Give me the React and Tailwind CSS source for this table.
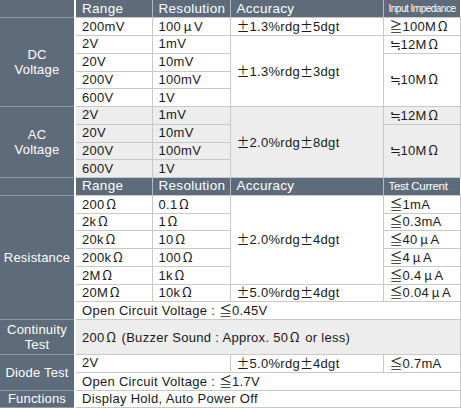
import React from 'react';

// Multimeter spec sheet table

const wide = /^[Ωμ]$/;

const sym = (str) =>
  str.split(/([±≦≧≒μΩ])/).map((part, i) =>
    /^[±≦≧≒μΩ]$/.test(part) ? (
      wide.test(part) ? (
        <span
          key={i}
          className="inline-block w-[13px] text-center font-['Noto_Sans_CJK_JP',sans-serif] leading-[14px] tracking-normal"
        >
          {part}
        </span>
      ) : (
        <span key={i} className="font-['Noto_Sans_CJK_JP',sans-serif] leading-[14px] tracking-normal">
          {part}
        </span>
      )
    ) : (
      part
    )
  );

const Label = ({ children, rows = 1 }) => (
  <td
    rowSpan={rows}
    className="border-b border-r-2 border-b-[#8f99a4] border-r-white bg-[#5e6b7a] p-0 text-center align-middle text-[13px] leading-[15px] tracking-[0.2px] text-white"
  >
    {children}
  </td>
);

const Head = ({ children }) => (
  <td className="border-l border-[#b3bac2] bg-[#5e6b7a] py-0 pl-[6px] text-[13.5px] leading-[14px] tracking-[0.3px] text-white">
    {children}
  </td>
);

const Cell = ({ children, rows = 1, cols = 1 }) => (
  <td
    rowSpan={rows}
    colSpan={cols}
    className="whitespace-nowrap border border-[#c8c8c8] py-0 pl-[6px] align-middle leading-[14px] tracking-[0.3px]"
  >
    {sym(children || '')}
  </td>
);

const rowH = 'h-[17.75px]';

export default function App() {
  return (
    <div className="h-[409px] w-[461px] overflow-hidden bg-white font-['Liberation_Sans',Arial,sans-serif] text-[13px] leading-[14px] text-[#1a1a1a]">
      <table className="w-[460px] table-fixed border-collapse">
        <colgroup>
          <col className="w-[75px]" />
          <col className="w-[77px]" />
          <col className="w-[78px]" />
          <col className="w-[153px]" />
          <col className="w-[77px]" />
        </colgroup>
        <tbody>
          {/* Header */}
          <tr className={rowH}>
            <Label />
            <Head>Range</Head>
            <Head>Resolution</Head>
            <Head>Accuracy</Head>
            <td className="whitespace-nowrap border-l border-[#b3bac2] bg-[#5e6b7a] py-0 pl-[5px] text-[10px] leading-[14px] tracking-[-0.5px] text-white">
              Input Impedance
            </td>
          </tr>

          {/* DC Voltage */}
          <tr className={rowH}>
            <Label rows={5}>
              DC
              <br />
              Voltage
            </Label>
            <Cell>200mV</Cell>
            <Cell>100μV</Cell>
            <Cell>±1.3%rdg±5dgt</Cell>
            <Cell>≧100MΩ</Cell>
          </tr>
          <tr className={rowH}>
            <Cell>2V</Cell>
            <Cell>1mV</Cell>
            <Cell rows={4}>±1.3%rdg±3dgt</Cell>
            <Cell>≒12MΩ</Cell>
          </tr>
          <tr className={rowH}>
            <Cell>20V</Cell>
            <Cell>10mV</Cell>
            <Cell rows={3}>≒10MΩ</Cell>
          </tr>
          <tr className={rowH}>
            <Cell>200V</Cell>
            <Cell>100mV</Cell>
          </tr>
          <tr className={rowH}>
            <Cell>600V</Cell>
            <Cell>1V</Cell>
          </tr>

          {/* AC Voltage */}
          <tr className={rowH + ' bg-[#ededed]'}>
            <Label rows={4}>
              AC
              <br />
              Voltage
            </Label>
            <Cell>2V</Cell>
            <Cell>1mV</Cell>
            <Cell rows={4}>±2.0%rdg±8dgt</Cell>
            <Cell>≒12MΩ</Cell>
          </tr>
          <tr className={rowH + ' bg-[#ededed]'}>
            <Cell>20V</Cell>
            <Cell>10mV</Cell>
            <Cell rows={3}>≒10MΩ</Cell>
          </tr>
          <tr className={rowH + ' bg-[#ededed]'}>
            <Cell>200V</Cell>
            <Cell>100mV</Cell>
          </tr>
          <tr className={rowH + ' bg-[#ededed]'}>
            <Cell>600V</Cell>
            <Cell>1V</Cell>
          </tr>

          {/* Header 2 */}
          <tr className={rowH}>
            <Label />
            <Head>Range</Head>
            <Head>Resolution</Head>
            <Head>Accuracy</Head>
            <td className="whitespace-nowrap border-l border-[#b3bac2] bg-[#5e6b7a] py-0 pl-[5px] text-[11.5px] leading-[14px] tracking-[-0.3px] text-white">
              Test Current
            </td>
          </tr>

          {/* Resistance */}
          <tr className={rowH}>
            <Label rows={7}>Resistance</Label>
            <Cell>200Ω</Cell>
            <Cell>0.1Ω</Cell>
            <Cell rows={5}>±2.0%rdg±4dgt</Cell>
            <Cell>≦1mA</Cell>
          </tr>
          <tr className={rowH}>
            <Cell>2kΩ</Cell>
            <Cell>1Ω</Cell>
            <Cell>≦0.3mA</Cell>
          </tr>
          <tr className={rowH}>
            <Cell>20kΩ</Cell>
            <Cell>10Ω</Cell>
            <Cell>≦40μA</Cell>
          </tr>
          <tr className={rowH}>
            <Cell>200kΩ</Cell>
            <Cell>100Ω</Cell>
            <Cell>≦4μA</Cell>
          </tr>
          <tr className={rowH}>
            <Cell>2MΩ</Cell>
            <Cell>1kΩ</Cell>
            <Cell>≦0.4μA</Cell>
          </tr>
          <tr className={rowH}>
            <Cell>20MΩ</Cell>
            <Cell>10kΩ</Cell>
            <Cell>±5.0%rdg±4dgt</Cell>
            <Cell>≦0.04μA</Cell>
          </tr>
          <tr className={rowH}>
            <Cell cols={4}>Open Circuit Voltage : ≦0.45V</Cell>
          </tr>

          {/* Continuity */}
          <tr className="h-[35px] bg-[#ededed]">
            <Label>
              Continuity
              <br />
              Test
            </Label>
            <Cell cols={4}>200Ω (Buzzer Sound : Approx. 50Ω or less)</Cell>
          </tr>

          {/* Diode */}
          <tr className={rowH}>
            <Label rows={2}>Diode Test</Label>
            <Cell cols={2}>2V</Cell>
            <Cell>±5.0%rdg±4dgt</Cell>
            <Cell>≦0.7mA</Cell>
          </tr>
          <tr className={rowH}>
            <Cell cols={4}>Open Circuit Voltage : ≦1.7V</Cell>
          </tr>

          {/* Functions */}
          <tr className={rowH}>
            <Label>Functions</Label>
            <Cell cols={4}>Display Hold, Auto Power Off</Cell>
          </tr>
        </tbody>
      </table>
    </div>
  );
}
